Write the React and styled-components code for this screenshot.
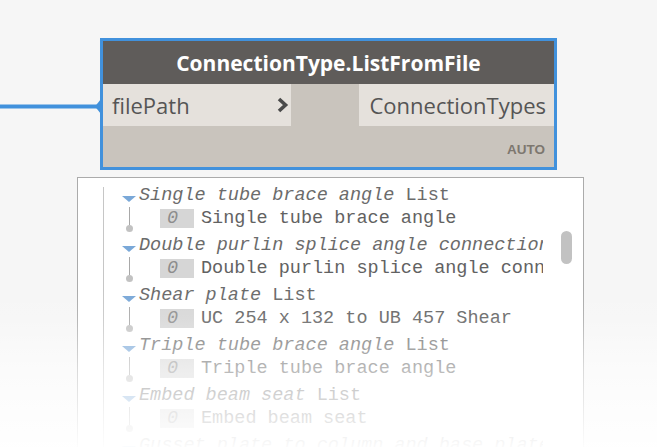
import React from "react";
import styled, { createGlobalStyle } from "styled-components";

const GlobalStyle = createGlobalStyle`
  html, body {
    margin: 0;
    padding: 0;
    background: #f6f6f6;
    overflow: hidden;
  }
`;

const BLUE = "#4191dc";

const Canvas = styled.div`
  position: relative;
  height: 447px;
  overflow: hidden;
  padding-top: 38px;
  box-sizing: border-box;
  font-family: "Open Sans", "Liberation Sans", sans-serif;
`;

const Node = styled.div`
  margin-left: 100px;
  width: 457px;
  box-sizing: border-box;
  border: 3px solid ${BLUE};
  background: #c9c4bd;
  display: flex;
  flex-direction: column;
`;

const Header = styled.div`
  height: 43px;
  background: #5f5c5a;
  color: #ffffff;
  display: flex;
  align-items: center;
  justify-content: center;
  font-weight: 700;
  font-size: 21px;
`;

const PortRow = styled.div`
  position: relative;
  height: 42px;
  display: grid;
  grid-template-columns: 188px 68px 1fr;
`;

const Port = styled.div`
  background: #e5e1dc;
  color: #555555;
  font-size: 22px;
  display: flex;
  align-items: center;
  justify-content: ${(p) => (p.$out ? "flex-end" : "space-between")};
  padding: ${(p) => (p.$out ? "0 8px 0 0" : "0 1px 0 9px")};
  box-sizing: border-box;
  white-space: nowrap;
`;

const Chevron = styled.svg`
  flex: none;
  width: 15px;
  height: 16px;
`;

const Wire = styled.svg`
  position: absolute;
  left: -103px;
  top: 0;
  width: 103px;
  height: 42px;
  overflow: visible;
`;

const Footer = styled.div`
  height: 41px;
  display: flex;
  align-items: flex-end;
  justify-content: flex-end;
  padding: 0 9px 10px 0;
  box-sizing: border-box;
  font-family: "Liberation Sans", Arial, sans-serif;
  font-weight: 700;
  font-size: 13.5px;
  color: #7d776f;
`;

const Preview = styled.div`
  margin: 7px 0 0 77px;
  width: 507px;
  height: 300px;
  box-sizing: border-box;
  border: 1px solid #ababab;
  background: #ffffff;
  display: flex;
`;

const Content = styled.div`
  width: 465px;
  flex: none;
  overflow: hidden;
  display: flex;
`;

const Guide = styled.div`
  flex: none;
  width: 1px;
  margin: 9px 0 0 25px;
  background: #c6c6c6;
`;

const Tree = styled.div`
  margin-left: 18px;
  padding-top: 6px;
  display: flex;
  flex-direction: column;
  font-family: "Liberation Mono", "DejaVu Sans Mono", monospace;
  font-size: 18.5px;
  white-space: nowrap;
`;

const GroupRow = styled.div`
  flex: none;
  height: 23px;
  line-height: 23px;
  display: flex;
  align-items: center;
  color: #6b6b6b;
`;

const Arrow = styled.svg`
  flex: none;
  width: 14px;
  height: 6px;
  margin: 7px 3px 0 0;
`;

const Name = styled.span`
  font-style: italic;
`;

const ItemRow = styled.div`
  flex: none;
  height: 27px;
  display: flex;
  align-items: flex-start;
  color: #626262;
`;

const Connector = styled.div`
  flex: none;
  width: 14px;
  display: flex;
  flex-direction: column;
  align-items: center;
`;

const Stem = styled.div`
  width: 1px;
  height: 18px;
  background: #a8a8a8;
`;

const Dot = styled.div`
  width: 7px;
  height: 7px;
  border-radius: 50%;
  background: #c2c2c2;
`;

const Index = styled.span`
  flex: none;
  width: 34px;
  height: 19px;
  line-height: 19px;
  margin: 2px 0 0 24px;
  padding-left: 7px;
  box-sizing: border-box;
  background: #d6d6d6;
  color: #8c8c8c;
  font-style: italic;
`;

const Value = styled.span`
  margin: 2px 0 0 7px;
  line-height: 19px;
`;

const ScrollCol = styled.div`
  flex: 1;
  padding: 53px 0 0 18px;
`;

const Thumb = styled.div`
  width: 11px;
  height: 33px;
  border-radius: 6px;
  background: #c2c2c2;
`;

const Fade = styled.div`
  position: absolute;
  left: 0;
  right: 0;
  top: 290px;
  bottom: 0;
  pointer-events: none;
  background: linear-gradient(
    to bottom,
    rgba(255, 255, 255, 0) 0px,
    rgba(255, 255, 255, 0.12) 28px,
    rgba(255, 255, 255, 0.55) 78px,
    rgba(255, 255, 255, 0.82) 128px,
    rgba(255, 255, 255, 0.97) 157px
  );
`;

const groups = [
  ["Single tube brace angle", "Single tube brace angle"],
  ["Double purlin splice angle connection", "Double purlin splice angle connection"],
  ["Shear plate", "UC 254 x 132 to UB 457 Shear"],
  ["Triple tube brace angle", "Triple tube brace angle"],
  ["Embed beam seat", "Embed beam seat"],
  ["Gusset plate to column and base plate", "Gusset plate to column and base plate"],
];

export default function App() {
  return (
    <>
      <GlobalStyle />
      <Canvas>
        <Node>
          <Header>ConnectionType.ListFromFile</Header>
          <PortRow>
            <Wire viewBox="0 0 103 42">
              <line x1="0" y1="22.5" x2="98" y2="22.5" stroke={BLUE} strokeWidth="4" />
              <path d="M101 15 L95 22.5 L101 30 Z" fill={BLUE} />
            </Wire>
            <Port>
              filePath
              <Chevron viewBox="0 0 15 16">
                <polyline
                  points="4,2 10.5,8 4,14"
                  fill="none"
                  stroke="#4a4a4a"
                  strokeWidth="3.6"
                />
              </Chevron>
            </Port>
            <div />
            <Port $out>ConnectionTypes</Port>
          </PortRow>
          <Footer>AUTO</Footer>
        </Node>
        <Preview>
          <Content>
            <Guide />
            <Tree>
              {groups.map(([name, value]) => (
                <React.Fragment key={name}>
                  <GroupRow>
                    <Arrow viewBox="0 0 14 6">
                      <path d="M0 0 L14 0 L7 6 Z" fill="#7aa8d8" />
                    </Arrow>
                    <Name>{name}</Name>&nbsp;List
                  </GroupRow>
                  <ItemRow>
                    <Connector>
                      <Stem />
                      <Dot />
                    </Connector>
                    <Index>0</Index>
                    <Value>{value}</Value>
                  </ItemRow>
                </React.Fragment>
              ))}
            </Tree>
          </Content>
          <ScrollCol>
            <Thumb />
          </ScrollCol>
        </Preview>
        <Fade />
      </Canvas>
    </>
  );
}
